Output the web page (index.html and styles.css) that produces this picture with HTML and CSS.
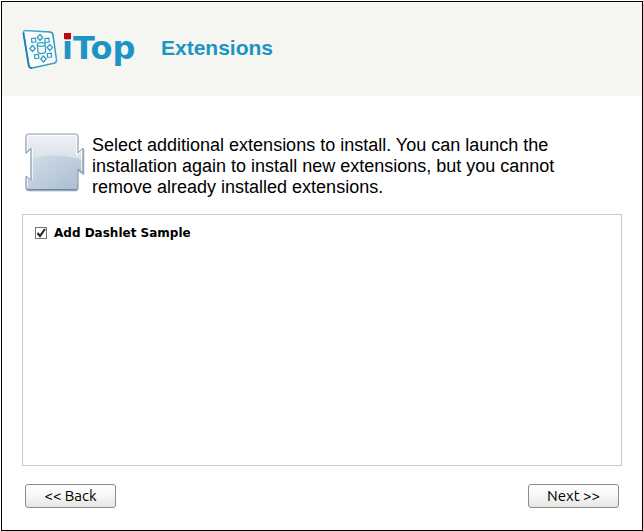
FILE: index.html
```html
<!DOCTYPE html>
<html lang="en">
  <head>
    <meta charset="UTF-8" />
    <meta name="viewport" content="width=device-width, initial-scale=1.0" />
    <title>iTop - Extensions</title>
    <link rel="stylesheet" href="styles.css">
  </head>
  <body>
    <form class="wizard">
      <header class="header">
        <svg class="logo" viewBox="0 0 116 44" role="img" aria-label="iTop">
          <defs>
            <linearGradient id="tile-edge" x1="0" y1="0" x2="1" y2="1">
              <stop offset="0" stop-color="#5fb4d6" />
              <stop offset="0.5" stop-color="#1f8fc0" />
              <stop offset="1" stop-color="#4ba6cc" />
            </linearGradient>
          </defs>
          <g fill="none" stroke="#2e9bc6">
            <path d="M3 3.500 L28 5 Q30.500 5.200 31 8 L34.500 33 Q34.800 35.500 32 36.200 L10 41 Q7.500 41.300 7 39 L1.500 6 Q1.200 3.500 3 3.500Z" fill="#fbfdfc" stroke="url(#tile-edge)" stroke-width="1.500" />
            <path d="M1.300 5.500 L6.800 39 Q7.500 41.500 10 41" stroke="#1c84b4" stroke-width="1.800" />
            <path d="M18 7.500 l2.800 3 -2.800 3 -2.800 -3z M10.500 18.500 l2.800 3 -2.800 3 -2.800 -3z M27.800 17.500 l2.800 3 -2.800 3 -2.800 -3z M21.500 29 l2.800 3 -2.800 3 -2.800 -3z" stroke-width="1.200" />
            <path d="M9.500 11.500 l4 -.3 .4 3.800 -4 .3z M22.800 11.500 l4 -.3 .4 3.800 -4 .3z M12.500 27.800 l4 -.3 .4 3.800 -4 .3z M25.200 26.500 l4 -.3 .4 3.800 -4 .3z" stroke-width="1.200" />
            <path d="M15.300 17.500 l.7 8 q4 2.500 7.700 -.5 l-.6 -7.500" fill="#fbfdfc" stroke-width="1.200" />
            <ellipse cx="19.200" cy="17.500" rx="3.900" ry="1.800" fill="#fbfdfc" stroke-width="1.200" />
          </g>
          <text class="logo-name" x="40" y="32">iTop</text>
          <rect x="42" y="6" width="7" height="6" fill="#c4070b" />
        </svg>
        <h1>Extensions</h1>
      </header>

      <main class="content">
        <div class="intro">
          <svg class="piece" viewBox="0 0 66 66" aria-hidden="true">
            <defs>
              <linearGradient id="piece-fill" x1="0" y1="0" x2="0" y2="1">
                <stop offset="0" stop-color="#f3f6f9" />
                <stop offset="1" stop-color="#b4c5d4" />
              </linearGradient>
              <linearGradient id="piece-shade" x1="0" y1="0" x2="1" y2="1">
                <stop offset="0" stop-color="#d3dee8" />
                <stop offset="1" stop-color="#a3b9cc" />
              </linearGradient>
              <clipPath id="piece-clip">
                <path d="M6 4 H54 Q56 4 56 6 V23 L61 18 V43 L56 39 V58 Q56 60 54 60 H7 Q4 60 4 58 V46 L9 50 V18 L4 23 V6 Q4 4 6 4Z" />
              </clipPath>
            </defs>
            <path d="M6 5 H54 Q56 5 56 7 V24 L62 19 V45 L56 41 V59 Q56 61 54 61 H7 Q4 61 4 59 V47 L9 51 V19 L4 24 V7 Q4 5 6 5Z" fill="#8795a3" stroke="#c4cbd1" stroke-width="1" />
            <g clip-path="url(#piece-clip)">
              <rect width="66" height="66" fill="url(#piece-fill)" />
              <path d="M0 32 Q32 19 66 32 V66 H0Z" fill="url(#piece-shade)" />
            </g>
            <path d="M6 4 H54 Q56 4 56 6 V23 L61 18 V43 L56 39 V58 Q56 60 54 60 H7 Q4 60 4 58 V46 L9 50 V18 L4 23 V6 Q4 4 6 4Z" fill="none" stroke="#8f9eac" stroke-width="1" />
            <path d="M5.500 20 V7 Q5.500 5.500 7 5.500 H53 Q54.500 5.500 54.500 7 V25 L59.500 21 V41 M10.500 18 V50 M5.500 48 V57" fill="none" stroke="#fff" stroke-opacity="0.700" />
            <path d="M5 59.500 H55" stroke="#6e88a1" />
          </svg>
          <p>Select additional extensions to install. You can launch the installation again to install new extensions, but you cannot remove already installed extensions.</p>
        </div>

        <div class="choices">
          <div class="choice">
            <input type="checkbox" id="dashlet" name="dashlet" checked />
            <label for="dashlet">Add Dashlet Sample</label>
          </div>
        </div>

        <div class="buttons">
          <button type="button">&lt;&lt; Back</button>
          <button type="submit">Next &gt;&gt;</button>
        </div>
      </main>
    </form>
  </body>
</html>
```
FILE: styles.css
```css
* {
  margin: 0;
  padding: 0;
  box-sizing: border-box;
}

body {
  background: #fff;
  color: #000;
  font-family: "Liberation Sans", Arial, sans-serif;
}

.wizard {
  display: flex;
  flex-direction: column;
  min-height: calc(100vh - 1px);
  margin: 1px 0 0 1px;
  border: 1px solid #000;
}

.header {
  display: flex;
  align-items: center;
  gap: 23px;
  height: 94px;
  padding: 0 20px;
  background: #f5f6f1;
}

.logo {
  width: 116px;
  height: 44px;
}

.logo-name {
  fill: #1c94c4;
  font-family: "DejaVu Sans", Verdana, sans-serif;
  font-size: 32px;
  font-weight: bold;
}

h1 {
  padding-bottom: 2px;
  color: #1c94c4;
  font-size: 21px;
  line-height: 26px;
}

.content {
  display: flex;
  flex: 1;
  flex-direction: column;
  padding: 34px 20px 22px;
}

.intro {
  display: flex;
  align-items: flex-start;
  gap: 4px;
}

.piece {
  flex: none;
  width: 66px;
  height: 66px;
}

.intro p {
  max-width: 490px;
  padding-top: 5px;
  font-size: 18px;
  line-height: 21px;
}

.choices {
  flex: 1;
  margin-top: 16px;
  padding: 10px 12px;
  border: 1px solid #c8c8c8;
}

.choice {
  display: flex;
  align-items: center;
  gap: 7px;
}

.choice input {
  appearance: none;
  width: 12px;
  height: 12px;
  border: 1px solid #77756f;
  background: #fff;
}

.choice input:checked {
  background: #fff url("data:image/svg+xml,%3Csvg xmlns='http://www.w3.org/2000/svg' viewBox='0 0 10 10'%3E%3Cpath d='M1.500 5 L4 8 L9 1' fill='none' stroke='%23222' stroke-width='2'/%3E%3C/svg%3E") center / 10px 10px no-repeat;
}

.choice label {
  font-family: "DejaVu Sans", Verdana, sans-serif;
  font-size: 12px;
  font-weight: bold;
  line-height: 16px;
}

.buttons {
  display: flex;
  justify-content: space-between;
  margin-top: 18px;
  padding: 0 3px;
}

button {
  width: 91px;
  height: 24px;
  border: 1px solid #8c8c8a;
  border-radius: 3px;
  background: linear-gradient(#fff, #f6f6f5 50%, #e6e5e3);
  color: #000;
  font-family: Ubuntu, "Noto Sans", sans-serif;
  font-size: 15px;
  line-height: 20px;
  cursor: pointer;
}

button:hover {
  background: #f6f6f5;
}
```
